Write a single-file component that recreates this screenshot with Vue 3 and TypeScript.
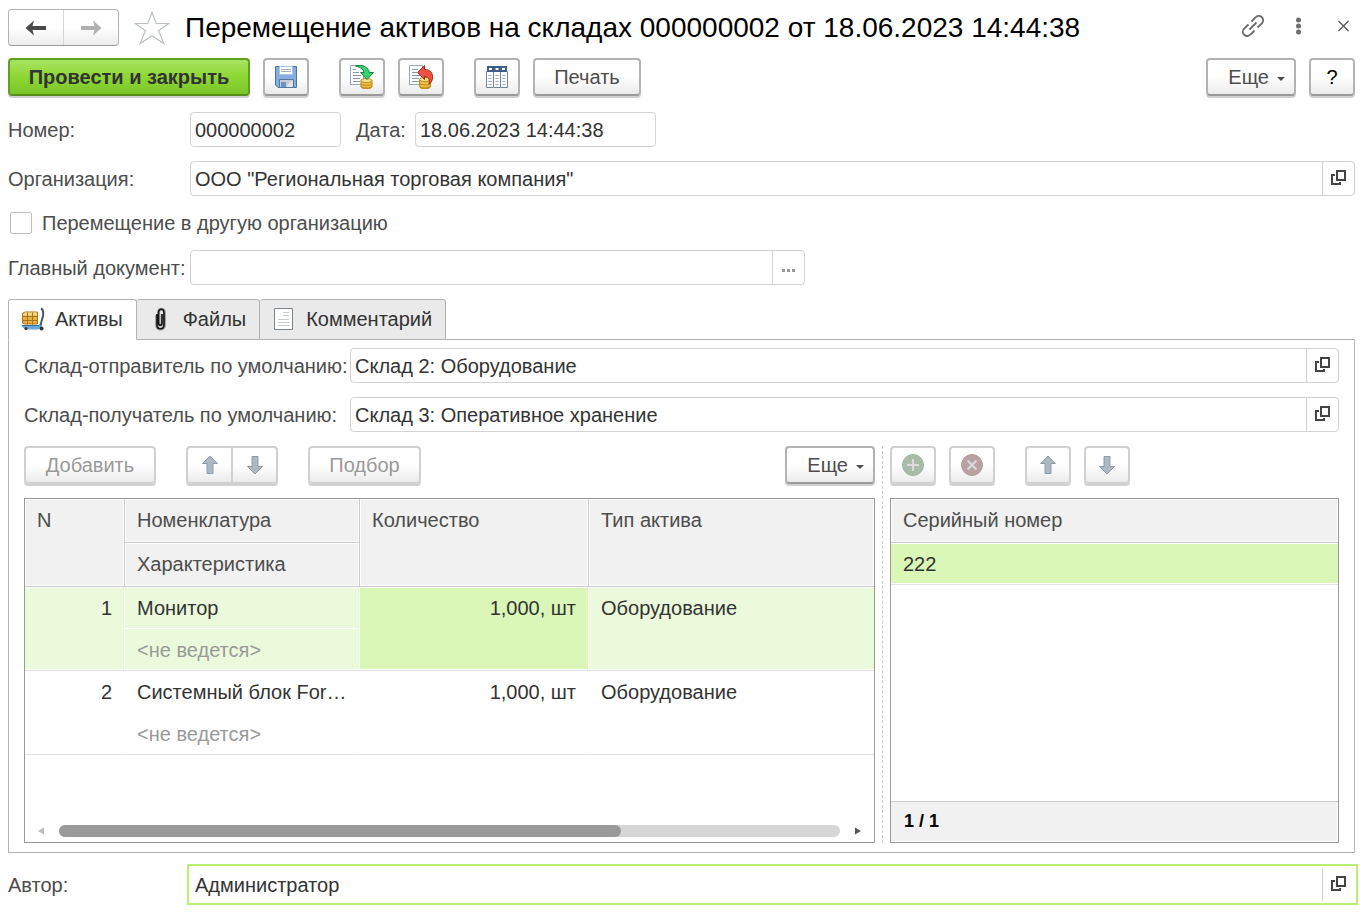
<script setup lang="ts">
import { ref } from 'vue'

interface AssetRow {
  n: number
  item: string
  feature: string
  quantity: string
  kind: string
}

type TabId = 'assets' | 'files' | 'comment'

const title = 'Перемещение активов на складах 000000002 от 18.06.2023 14:44:38'

const docNumber = ref('000000002')
const docDate = ref('18.06.2023 14:44:38')
const organization = ref('ООО "Региональная торговая компания"')
const otherOrganization = ref(false)
const mainDocument = ref('')
const sender = ref('Склад 2: Оборудование')
const receiver = ref('Склад 3: Оперативное хранение')
const author = ref('Администратор')

const tabs: { id: TabId; label: string }[] = [
  { id: 'assets', label: 'Активы' },
  { id: 'files', label: 'Файлы' },
  { id: 'comment', label: 'Комментарий' },
]
const activeTab = ref<TabId>('assets')

const rows: AssetRow[] = [
  { n: 1, item: 'Монитор', feature: '<не ведется>', quantity: '1,000, шт', kind: 'Оборудование' },
  { n: 2, item: 'Системный блок For…', feature: '<не ведется>', quantity: '1,000, шт', kind: 'Оборудование' },
]
const selectedRow = ref(1)
const serials: string[] = ['222']
</script>

<template>
  <main class="form">
    <header class="titlebar">
      <div class="history">
        <button type="button" aria-label="Назад">
          <svg width="22" height="16" viewBox="0 0 22 16"><path d="M0.500 8 9 .5 7.500 6H21v4H7.500L9 15.500z" fill="#4a4a4a" /></svg>
        </button>
        <button type="button" aria-label="Вперед">
          <svg width="22" height="16" viewBox="0 0 22 16"><path d="M21.500 8 13 .5 14.500 6H1v4h13.500L13 15.500z" fill="#b0b0b0" /></svg>
        </button>
      </div>
      <button type="button" class="plain star" aria-label="В избранное">
        <svg width="36" height="34" viewBox="0 0 36 34"><path d="M18 1.500 22.200 12.500H34.500L24.600 19.800 29.800 32.500 18 24.700 6.200 32.500 11.400 19.800 1.500 12.500H13.800z" fill="none" stroke="#b9c1c7" stroke-width="1.200" /></svg>
      </button>
      <h1>{{ title }}</h1>
      <div class="window-tools">
        <button type="button" class="plain" aria-label="Ссылка">
          <svg width="24" height="24" viewBox="0 0 24 24" fill="none" stroke="#6a6a6a" stroke-width="1.800">
            <path d="M8.500 15.500 15.500 8.500" />
            <path d="M10.500 7.500 14.500 3.500a4.300 4.300 0 0 1 6.600 5.600L16.500 13.500" />
            <path d="M13.500 16.500 9.500 20.500a4.300 4.300 0 0 1-6.600-5.600L7.500 10.500" />
          </svg>
        </button>
        <button type="button" class="plain" aria-label="Действия">
          <svg width="24" height="24" viewBox="0 0 24 24" fill="#6e6e6e"><circle cx="12.500" cy="6" r="2.500" /><circle cx="12.500" cy="12" r="2.500" /><circle cx="12.500" cy="18" r="2.500" /></svg>
        </button>
        <button type="button" class="plain" aria-label="Закрыть">
          <svg width="24" height="24" viewBox="0 0 24 24"><path d="M7.500 7 17.500 17M17.500 7 7.500 17" stroke="#5a5a5a" stroke-width="1.400" /></svg>
        </button>
      </div>
    </header>

    <div class="toolbar main-toolbar">
      <button type="button" class="btn primary">Провести и закрыть</button>
      <button type="button" class="btn icon" aria-label="Записать">
        <svg width="24" height="24" viewBox="0 0 24 24">
          <path d="M1.500 1.500h21v21H4l-2.500-2.500z" fill="#86ace0" stroke="#4a75a8" />
          <path d="M5.500 1.500h13v8h-13z" fill="#fff" stroke="#a9c4e6" />
          <path d="M7 4.500h10M7 6.500h10" stroke="#a3abb3" />
          <path d="M5.500 14.500h14v8h-14z" fill="#c7cdd3" stroke="#54779f" />
          <path d="M7 17h5v5H7z" fill="#6f94bd" /><path d="M13 21 18.500 15v7H13z" fill="#e6e9ec" />
        </svg>
      </button>
      <button type="button" class="btn icon apart" aria-label="Провести">
        <svg width="24" height="24" viewBox="0 0 24 24">
          <path d="M.5.5h13v19H.5z" fill="#fff" stroke="#9aa8b5" />
          <path d="M3 4.500h3M3 7.500h6M3 10.500h8M3 13.500h7M3 16.500h7" stroke="#8798a8" />
          <path d="M11 15.500v6c0 3 11 3 11 0v-6z" fill="#eebd43" stroke="#b88720" />
          <ellipse cx="16.500" cy="15.500" rx="5.500" ry="2" fill="#fbe18a" stroke="#b88720" />
          <path d="M11 18.500c0 2.600 11 2.600 11 0M11 21c0 2.600 11 2.600 11 0" fill="none" stroke="#b88720" />
          <path d="M5.500 1C9 0 12 .2 14.500 1.500 17.500 3 19 5 19.300 7.500H23.500L17 14.500 10.500 7.500H14C13.500 4 10 2 5.500 1z" fill="#35d471" stroke="#13823c" stroke-linejoin="round" />
        </svg>
      </button>
      <button type="button" class="btn icon" aria-label="Отмена проведения">
        <svg width="24" height="24" viewBox="0 0 24 24">
          <path d="M.5.5h13v19H.5z" fill="#fff" stroke="#9aa8b5" />
          <path d="M3 4.500h6M3 7.500h5M3 10.500h8M3 13.500h7M3 16.500h7" stroke="#8798a8" />
          <path d="M10.500 14.500v7c0 3 11 3 11 0v-7z" fill="#eebd43" stroke="#b88720" />
          <ellipse cx="16" cy="14.500" rx="5.500" ry="2" fill="#fbe18a" stroke="#b88720" />
          <path d="M10.500 18c0 2.600 11 2.600 11 0M10.500 21c0 2.600 11 2.600 11 0" fill="none" stroke="#b88720" />
          <path d="M8.500 7.500 15.500.5V4.500c6 0 8.500 4 8 8.500-.3 3-1.500 5-3.500 6 1-4 0-7.500-4.500-7.500V14.500z" fill="#ec5343" stroke="#ad2417" stroke-linejoin="round" />
        </svg>
      </button>
      <button type="button" class="btn icon apart" aria-label="Движения документа">
        <svg width="24" height="24" viewBox="0 0 24 24">
          <path d="M1.500 6.500h7v16h-7zM8.500 6.500h7v16h-7zM15.500 6.500h7v16h-7z" fill="#fff" stroke="#74879a" />
          <path d="M2 1h20v6H2z" fill="#3e5f87" />
          <path d="M4 3h3v2H4zM10.500 3h3v2h-3zM17 3h3v2h-3z" fill="#fff" />
          <path d="M3.500 10.500h3M3.500 13.500h3M3.500 16.500h3M3.500 19.500h3M10.500 10.500h3M10.500 13.500h3M10.500 16.500h3M10.500 19.500h3M17.500 10.500h3M17.500 13.500h3M17.500 16.500h3M17.500 19.500h3" stroke="#8494a3" stroke-dasharray="1.300 .5" />
        </svg>
      </button>
      <button type="button" class="btn print">Печать</button>
      <button type="button" class="btn more push">Еще<span class="caret"></span></button>
      <button type="button" class="btn icon help">?</button>
    </div>

    <div class="row">
      <label class="caption" for="number">Номер:</label>
      <div class="field number"><input id="number" v-model="docNumber" type="text" /></div>
      <label class="date-caption" for="date">Дата:</label>
      <div class="field date"><input id="date" v-model="docDate" type="text" /></div>
    </div>

    <div class="row">
      <label class="caption" for="organization">Организация:</label>
      <div class="field wide">
        <input id="organization" v-model="organization" type="text" />
        <button type="button" aria-label="Открыть организацию">
          <svg width="15" height="17" viewBox="0 0 15 17" fill="none" stroke="#444" stroke-width="2"><path d="M6 1h8v9H6z" /><path d="M4 5H1v9h8v-2" /></svg>
        </button>
      </div>
    </div>

    <label class="row check-row">
      <input v-model="otherOrganization" type="checkbox" />
      <span>Перемещение в другую организацию</span>
    </label>

    <div class="row">
      <label class="caption" for="main-document">Главный документ:</label>
      <div class="field document">
        <input id="main-document" v-model="mainDocument" type="text" />
        <button type="button" aria-label="Выбрать документ">
          <svg width="15" height="17" viewBox="0 0 15 17" fill="#999"><path d="M1 10h3v3H1zM6 10h3v3H6zM11 10h3v3h-3z" /></svg>
        </button>
      </div>
    </div>

    <section class="pages">
      <div class="tabs" role="tablist">
        <button
          v-for="tab in tabs"
          :key="tab.id"
          type="button"
          role="tab"
          :aria-selected="activeTab === tab.id"
          :class="{ active: activeTab === tab.id }"
          @click="activeTab = tab.id"
        >
          <svg v-if="tab.id === 'assets'" width="24" height="24" viewBox="0 0 24 24">
            <path d="M1.500 6.500 4 5h12.500v12h-13l-2-1z" fill="#e9b040" stroke="#a8741f" />
            <path d="M2 7.500 4 5.500h12v3H2z" fill="#f8d98c" />
            <path d="M6.500 5.500v12M11.500 5.500v12M2 9.500h14.500M2 13.500h14.500" stroke="#a9731d" fill="none" />
            <path d="M0 18.500h17l4-3v4l-4 3H4z" fill="#6aa6d9" />
            <path d="M1 18.500h17" stroke="#3a6f9c" />
            <path d="M19.500 18 22 9c.6-4 .3-6.500-2-7.500" fill="none" stroke="#4a5660" stroke-width="2" />
            <circle cx="5" cy="21.500" r="1.500" fill="#333" /><circle cx="20.500" cy="21.500" r="2" fill="#333" />
          </svg>
          <svg v-else-if="tab.id === 'files'" width="24" height="24" viewBox="0 0 24 24" fill="none">
            <path d="M7.500 8v10c0 5.500 8 5.500 8 0V6c0-5-6-5-6 0v10c0 3 3.500 3 3.500 0V7" stroke="#a5a5a5" stroke-width="3" />
            <path d="M8 7v11c0 5 7 5 7 0V6c0-5-5.500-5-5.500 0v10c0 3 3.500 3 3.500 0V7" stroke="#151515" stroke-width="1.600" />
          </svg>
          <svg v-else width="24" height="24" viewBox="0 0 24 24">
            <path d="M2.500 1.500h18v21h-18z" fill="#fff" stroke="#7d858c" />
            <path d="M11 5.500h6M11 8.500h6M6 12.500h11M6 15.500h11M6 18.500h11" stroke="#c3ccd2" />
          </svg>
          <span>{{ tab.label }}</span>
        </button>
      </div>

      <div class="page" role="tabpanel">
        <div class="row">
          <label class="caption" for="sender">Склад-отправитель по умолчанию:</label>
          <div class="field wide">
            <input id="sender" v-model="sender" type="text" />
            <button type="button" aria-label="Открыть склад-отправитель">
              <svg width="15" height="17" viewBox="0 0 15 17" fill="none" stroke="#444" stroke-width="2"><path d="M6 1h8v9H6z" /><path d="M4 5H1v9h8v-2" /></svg>
            </button>
          </div>
        </div>
        <div class="row">
          <label class="caption" for="receiver">Склад-получатель по умолчанию:</label>
          <div class="field wide">
            <input id="receiver" v-model="receiver" type="text" />
            <button type="button" aria-label="Открыть склад-получатель">
              <svg width="15" height="17" viewBox="0 0 15 17" fill="none" stroke="#444" stroke-width="2"><path d="M6 1h8v9H6z" /><path d="M4 5H1v9h8v-2" /></svg>
            </button>
          </div>
        </div>

        <div class="panes">
          <div class="pane">
            <div class="toolbar">
              <button type="button" class="btn add" disabled>Добавить</button>
              <div class="pair apart">
                <button type="button" class="btn" disabled aria-label="Переместить вверх">
                  <svg width="18" height="20" viewBox="0 0 18 20"><path d="M9 1 16.500 8.500H12V18.500H6V8.500H1.500z" fill="#adb9c2" stroke="#8d9ba8" /></svg>
                </button>
                <button type="button" class="btn" disabled aria-label="Переместить вниз">
                  <svg width="18" height="20" viewBox="0 0 18 20"><path d="M9 19 16.500 11.500H12V1.500H6v10H1.500z" fill="#adb9c2" stroke="#8d9ba8" /></svg>
                </button>
              </div>
              <button type="button" class="btn pick apart" disabled>Подбор</button>
              <button type="button" class="btn more push">Еще<span class="caret"></span></button>
            </div>
            <div class="grid">
              <table class="assets">
                <colgroup><col class="c-n" /><col class="c-item" /><col class="c-qty" /><col /></colgroup>
                <thead>
                  <tr>
                    <th rowspan="2">N</th>
                    <th>Номенклатура</th>
                    <th rowspan="2">Количество</th>
                    <th rowspan="2">Тип актива</th>
                  </tr>
                  <tr><th>Характеристика</th></tr>
                </thead>
                <tbody
                  v-for="row in rows"
                  :key="row.n"
                  :class="{ selected: selectedRow === row.n }"
                  @click="selectedRow = row.n"
                >
                  <tr>
                    <td rowspan="2" class="num">{{ row.n }}</td>
                    <td class="item">{{ row.item }}</td>
                    <td rowspan="2" class="num current">{{ row.quantity }}</td>
                    <td rowspan="2">{{ row.kind }}</td>
                  </tr>
                  <tr><td class="muted">{{ row.feature }}</td></tr>
                </tbody>
              </table>
              <div class="scroll">
                <svg width="6" height="8" viewBox="0 0 6 8"><path d="M6 .5v7L0 4z" fill="#bcbcbc" /></svg>
                <div class="track"><div class="thumb"></div></div>
                <svg width="6" height="8" viewBox="0 0 6 8"><path d="M0 .5v7L6 4z" fill="#555" /></svg>
              </div>
            </div>
          </div>

          <div class="splitter"></div>

          <div class="pane">
            <div class="toolbar">
              <button type="button" class="btn icon" disabled aria-label="Добавить номер">
                <svg width="22" height="22" viewBox="0 0 22 22"><circle cx="11" cy="11" r="10.500" fill="#a9bba9" stroke="#9cb39f" /><path d="M11 5v12M5 11h12" stroke="#dadada" stroke-width="2" /></svg>
              </button>
              <button type="button" class="btn icon" disabled aria-label="Удалить номер">
                <svg width="22" height="22" viewBox="0 0 22 22"><circle cx="11" cy="11" r="10.500" fill="#b8a3a2" stroke="#b29b99" /><path d="M6.500 6.500 15.500 15.500M15.500 6.500 6.500 15.500" stroke="#dadada" stroke-width="2" /></svg>
              </button>
              <button type="button" class="btn icon apart" disabled aria-label="Номер вверх">
                <svg width="18" height="20" viewBox="0 0 18 20"><path d="M9 1 16.500 8.500H12V18.500H6V8.500H1.500z" fill="#adb9c2" stroke="#8d9ba8" /></svg>
              </button>
              <button type="button" class="btn icon" disabled aria-label="Номер вниз">
                <svg width="18" height="20" viewBox="0 0 18 20"><path d="M9 19 16.500 11.500H12V1.500H6v10H1.500z" fill="#adb9c2" stroke="#8d9ba8" /></svg>
              </button>
            </div>
            <div class="grid">
              <table class="serials">
                <thead><tr><th>Серийный номер</th></tr></thead>
                <tbody><tr v-for="serial in serials" :key="serial"><td>{{ serial }}</td></tr></tbody>
              </table>
              <div class="counter">1 / {{ serials.length }}</div>
            </div>
          </div>
        </div>
      </div>
    </section>

    <div class="row">
      <label class="caption" for="author">Автор:</label>
      <div class="field wide focused">
        <input id="author" v-model="author" type="text" />
        <button type="button" aria-label="Открыть автора">
          <svg width="15" height="17" viewBox="0 0 15 17" fill="none" stroke="#444" stroke-width="2"><path d="M6 1h8v9H6z" /><path d="M4 5H1v9h8v-2" /></svg>
        </button>
      </div>
    </div>
  </main>
</template>

<style>
body {
  margin: 0;
  background: #fff;
}
</style>

<style scoped>
* {
  box-sizing: border-box;
}
.form {
  display: flex;
  flex-direction: column;
  gap: 14px;
  min-height: 100vh;
  padding: 9px 9px 11px 8px;
  color: #4d4d4d;
  font: 20px/24px "Liberation Sans", Arial, sans-serif;
}
button,
input {
  margin: 0;
  font: inherit;
}
button {
  display: flex;
  align-items: center;
  justify-content: center;
  padding: 0;
}
svg {
  display: block;
  flex: none;
}

.titlebar {
  display: flex;
  align-items: center;
  height: 37px;
  margin-bottom: -2px;
}
.history {
  display: flex;
  flex: none;
  width: 111px;
  height: 37px;
  border: 1px solid #b3b3b3;
  border-bottom-color: #9c9c9c;
  border-radius: 4px;
  background: linear-gradient(#fff 50%, #ececec);
}
.history button {
  flex: 1;
  border: 0;
  background: none;
}
.history button + button {
  border-left: 1px solid #d4d4d4;
}
.plain {
  border: 0;
  background: none;
}
.star {
  flex: none;
  margin: 0 15px;
}
h1 {
  flex: 1;
  min-width: 0;
  margin: 0;
  overflow: hidden;
  color: #000;
  font-size: 28px;
  font-weight: 400;
  line-height: 36px;
  white-space: nowrap;
}
.window-tools {
  display: flex;
  gap: 21px;
  padding-bottom: 4px;
}

.toolbar {
  display: flex;
  gap: 13px;
  height: 40px;
}
.btn {
  flex: none;
  height: 38px;
  padding: 0 18px;
  border: 2px solid #b3b3b3;
  border-bottom-color: #999;
  border-radius: 4px;
  background: linear-gradient(#fff 50%, #ebebeb);
  box-shadow: 0 2px #d0d0d0;
  color: #4d4d4d;
  white-space: nowrap;
}
.btn.icon {
  width: 46px;
  padding: 0;
}
.btn:disabled {
  border-color: #d0d0d0;
  color: #999;
}
.btn.primary {
  min-width: 242px;
  border-color: #5f9f22;
  border-bottom-color: #558f1e;
  background: linear-gradient(#a8e363, #8dd733 50%, #7cc52a);
  color: #333;
  font-weight: 700;
}
.btn.print {
  min-width: 108px;
}
.btn.add {
  min-width: 132px;
}
.btn.pick {
  min-width: 113px;
}
.btn.help {
  color: #000;
}
.btn.more {
  gap: 8px;
  padding: 0 9px 0 20px;
}
.apart {
  margin-left: 17px;
}
.push {
  margin-left: auto;
}
.caret {
  margin-top: 3px;
  border: 4px solid transparent;
  border-top-color: #4d4d4d;
  border-bottom: 0;
}
.pair {
  display: flex;
}
.pair .btn {
  width: 47px;
  padding: 0;
  border-radius: 4px 0 0 4px;
}
.pair .btn + .btn {
  width: 45px;
  border-left: 0;
  border-radius: 0 4px 4px 0;
}

.row {
  display: flex;
  align-items: center;
}
.caption {
  flex: none;
  width: 182px;
  white-space: nowrap;
}
.field {
  display: flex;
  min-width: 0;
  height: 35px;
  border: 1px solid #d3d3d3;
  border-radius: 4px;
  background: #fff;
}
.field input {
  flex: 1;
  min-width: 0;
  padding: 0 4px;
  border: 0;
  outline: 0;
  background: none;
  color: #333;
}
.field button {
  flex: none;
  width: 32px;
  border: 0;
  border-left: 1px solid #d3d3d3;
  background: none;
}
.field.number {
  width: 151px;
}
.date-caption {
  width: 59px;
  margin-left: 15px;
}
.field.date {
  width: 241px;
}
.field.document {
  width: 615px;
}
.field.wide {
  flex: 1;
}
.field.focused {
  border-color: #fff;
  border-radius: 0;
  outline: 2px solid #b9f073;
  outline-offset: 1px;
}
.check-row {
  gap: 10px;
  height: 26px;
  padding-left: 2px;
}
.check-row input {
  width: 22px;
  height: 22px;
  border: 1px solid #bfbfbf;
  border-radius: 2px;
  appearance: none;
}
.check-row input:checked {
  background: #8dd733;
}

.pages {
  display: flex;
  flex: 1;
  flex-direction: column;
}
.tabs {
  display: flex;
  height: 41px;
  margin-bottom: -1px;
}
.tabs button {
  position: relative;
  gap: 10px;
  padding: 0 13px 2px 12px;
  border: 1px solid #b3b3b3;
  border-left: 0;
  border-radius: 3px 3px 0 0;
  background: #eaeaea;
  color: #333;
}
.tabs button:first-child {
  border-left: 1px solid #b3b3b3;
}
.tabs button.active {
  border-bottom-color: #fff;
  background: #fff;
}
.page {
  display: flex;
  flex: 1;
  flex-direction: column;
  gap: 14px;
  padding: 8px 15px 9px;
  border: 1px solid #b3b3b3;
}
.page .caption {
  width: 326px;
}

.panes {
  display: grid;
  flex: 1;
  grid-template-columns: minmax(0, 851fr) 15px minmax(0, 449fr);
}
.pane {
  display: flex;
  flex-direction: column;
  gap: 12px;
}
.splitter {
  justify-self: center;
  border-left: 1px dashed #ccc;
}
.grid {
  display: flex;
  flex: 1;
  flex-direction: column;
  border: 1px solid #999;
}
table {
  width: 100%;
  border-collapse: separate;
  border-spacing: 0;
  table-layout: fixed;
}
.c-n {
  width: 100px;
}
.c-item {
  width: 235px;
}
.c-qty {
  width: 229px;
}
th {
  height: 44px;
  padding: 9px 12px 10px;
  border-right: 1px solid #ccc;
  border-bottom: 1px solid #ccc;
  background: #f1f1f1;
  box-shadow: inset 0 0 0 1px #fff;
  font-weight: 400;
  text-align: left;
  vertical-align: top;
}
th:last-child {
  border-right: 0;
}
thead tr + tr th:last-child {
  border-right: 1px solid #ccc;
}
td {
  height: 42px;
  padding: 9px 12px 8px;
  border-right: 1px solid #fff;
  border-bottom: 1px solid #e3e3e3;
  color: #333;
  vertical-align: top;
  white-space: nowrap;
}
td:last-child {
  border-right: 0;
}
.assets td.item {
  border-bottom-color: #fff;
}
.assets td.muted {
  border-right: 1px solid #fff;
  color: #999;
}
.num {
  text-align: right;
}
.selected td {
  background: #ebfadb;
}
.selected td.current,
.serials td {
  background: #daf7b8;
}
.selected td,
.serials td {
  box-shadow: inset 0 1px #fff, inset 0 -1px #fff;
}
.selected td.item {
  box-shadow: inset 0 1px #fff;
}
.selected td.muted {
  box-shadow: inset 0 -1px #fff;
}
.scroll {
  display: flex;
  align-items: center;
  gap: 15px;
  height: 22px;
  margin-top: auto;
  padding: 0 13px;
}
.track {
  flex: 1;
  height: 12px;
  border-radius: 6px;
  background: #d6d6d6;
}
.thumb {
  width: 72%;
  height: 12px;
  border-radius: 6px;
  background: #999;
}
.counter {
  height: 41px;
  margin-top: auto;
  padding: 7px 13px;
  border-top: 1px solid #ccc;
  background: #f1f1f1;
  box-shadow: inset -1px -1px #fff;
  color: #000;
  font-size: 18px;
  font-weight: 700;
}
</style>
